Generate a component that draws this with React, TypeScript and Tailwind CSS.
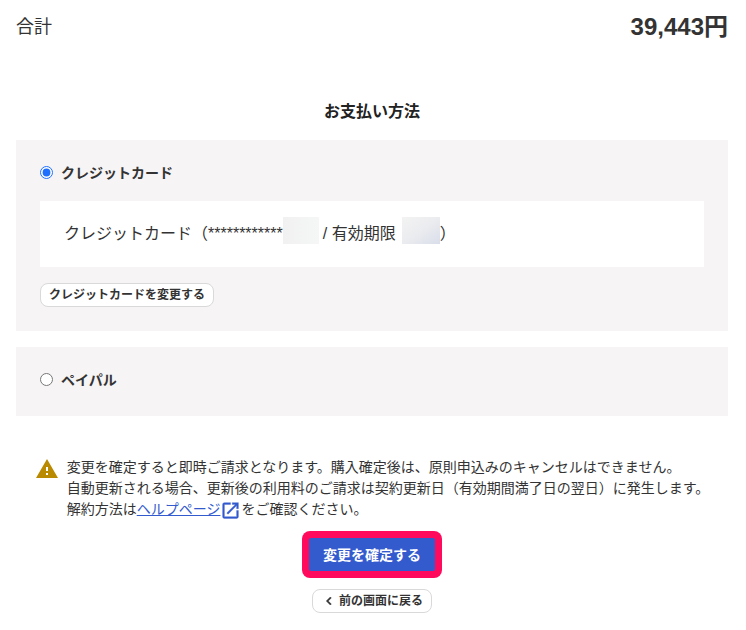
import { useState } from "react";
import type { ReactNode } from "react";

function WarningIcon() {
  return (
    <svg width="24" height="24" viewBox="0 0 24 24" fill="#b98900" className="shrink-0" aria-hidden="true">
      <path d="M1 21h22L12 2 1 21zm12-3h-2v-2h2v2zm0-4h-2v-4h2v4z" />
    </svg>
  );
}

function OpenInNewIcon() {
  return (
    <svg
      width="21"
      height="21"
      viewBox="0 0 24 24"
      fill="currentColor"
      stroke="currentColor"
      strokeWidth="0.4"
      className="-my-1 inline-block align-middle"
      aria-hidden="true"
    >
      <path d="M19 19H5V5h7V3H5c-1.11 0-2 .9-2 2v14c0 1.1.89 2 2 2h14c1.1 0 2-.9 2-2v-7h-2v7zM14 3v2h3.59l-9.83 9.83 1.41 1.41L19 6.41V10h2V3h-7z" />
    </svg>
  );
}

function ChevronLeftIcon() {
  return (
    <svg
      width="16"
      height="16"
      viewBox="0 0 24 24"
      fill="currentColor"
      stroke="currentColor"
      strokeWidth="0.8"
      aria-hidden="true"
    >
      <path d="M15.41 7.41 14 6l-6 6 6 6 1.41-1.41L10.83 12z" />
    </svg>
  );
}

type MethodProps = {
  id: string;
  label: string;
  checked: boolean;
  onSelect: (id: string) => void;
  children?: ReactNode;
};

function PaymentMethod({ id, label, checked, onSelect, children }: MethodProps) {
  return (
    <div className="bg-[#f6f4f5] p-6">
      <div className="mb-1 flex h-[17px] items-center gap-2">
        <input
          type="radio"
          id={id}
          name="payment"
          checked={checked}
          onChange={() => onSelect(id)}
          className="size-[13px] accent-[#1f6fff]"
        />
        <label htmlFor={id} className="text-sm font-bold">
          {label}
        </label>
      </div>
      {children}
    </div>
  );
}

export default function App() {
  const [method, setMethod] = useState("card");

  return (
    <main className="bg-white pt-3 pr-[18px] pb-4 pl-4 font-['Liberation_Sans','Noto_Sans_CJK_JP',sans-serif] text-[#333]">
      <div className="flex items-center justify-between">
        <span className="text-lg leading-[30px]">合計</span>
        <strong className="text-2xl leading-[30px] font-bold">39,443円</strong>
      </div>

      <h2 className="mt-[58px] text-center text-base leading-6 font-bold text-[#222]">お支払い方法</h2>

      <div className="mt-4 grid gap-4">
        <PaymentMethod id="card" label="クレジットカード" checked={method === "card"} onSelect={setMethod}>
          <div className="mt-5 flex min-h-[66px] items-start bg-white px-6 py-4 text-base leading-[33px]">
            <span>クレジットカード（************</span>
            <span className="h-[27px] w-9 bg-linear-to-r from-[#f1f1f1] to-[#f5f6f6]" />
            <span className="ml-1">/ 有効期限</span>
            <span className="ml-[6px] h-[27px] w-[38px] bg-linear-to-br from-[#f3f3f3] via-[#ebecef] to-[#d9deea]" />
            <span>）</span>
          </div>
          <button
            type="button"
            className="mt-4 block h-6 rounded-lg border border-[#d9d9d9] bg-white px-2 text-xs font-bold"
          >
            クレジットカードを変更する
          </button>
        </PaymentMethod>
        <PaymentMethod id="paypal" label="ペイパル" checked={method === "paypal"} onSelect={setMethod} />
      </div>

      <div className="mt-[41px] flex justify-center gap-2">
        <WarningIcon />
        <p className="text-sm leading-[21px]">
          変更を確定すると即時ご請求となります。購入確定後は、原則申込みのキャンセルはできません。
          <br />
          自動更新される場合、更新後の利用料のご請求は契約更新日（有効期間満了日の翌日）に発生します。
          <br />
          解約方法は
          <a href="#help" className="text-[#335bce]">
            <span className="underline">ヘルプページ</span>
            <OpenInNewIcon />
          </a>
          をご確認ください。
        </p>
      </div>

      <div className="mt-[11px] flex flex-col items-center gap-[11px]">
        <div className="rounded-lg bg-[#ff0a5c] p-[7px]">
          <button
            type="button"
            className="block h-[33px] rounded-xs bg-[#335bce] px-[14px] text-sm font-bold text-white"
          >
            変更を確定する
          </button>
        </div>
        <button
          type="button"
          className="flex h-6 items-center gap-0.5 rounded-lg border border-[#d9d9d9] bg-white px-2 text-xs font-bold"
        >
          <ChevronLeftIcon />
          前の画面に戻る
        </button>
      </div>
    </main>
  );
}
